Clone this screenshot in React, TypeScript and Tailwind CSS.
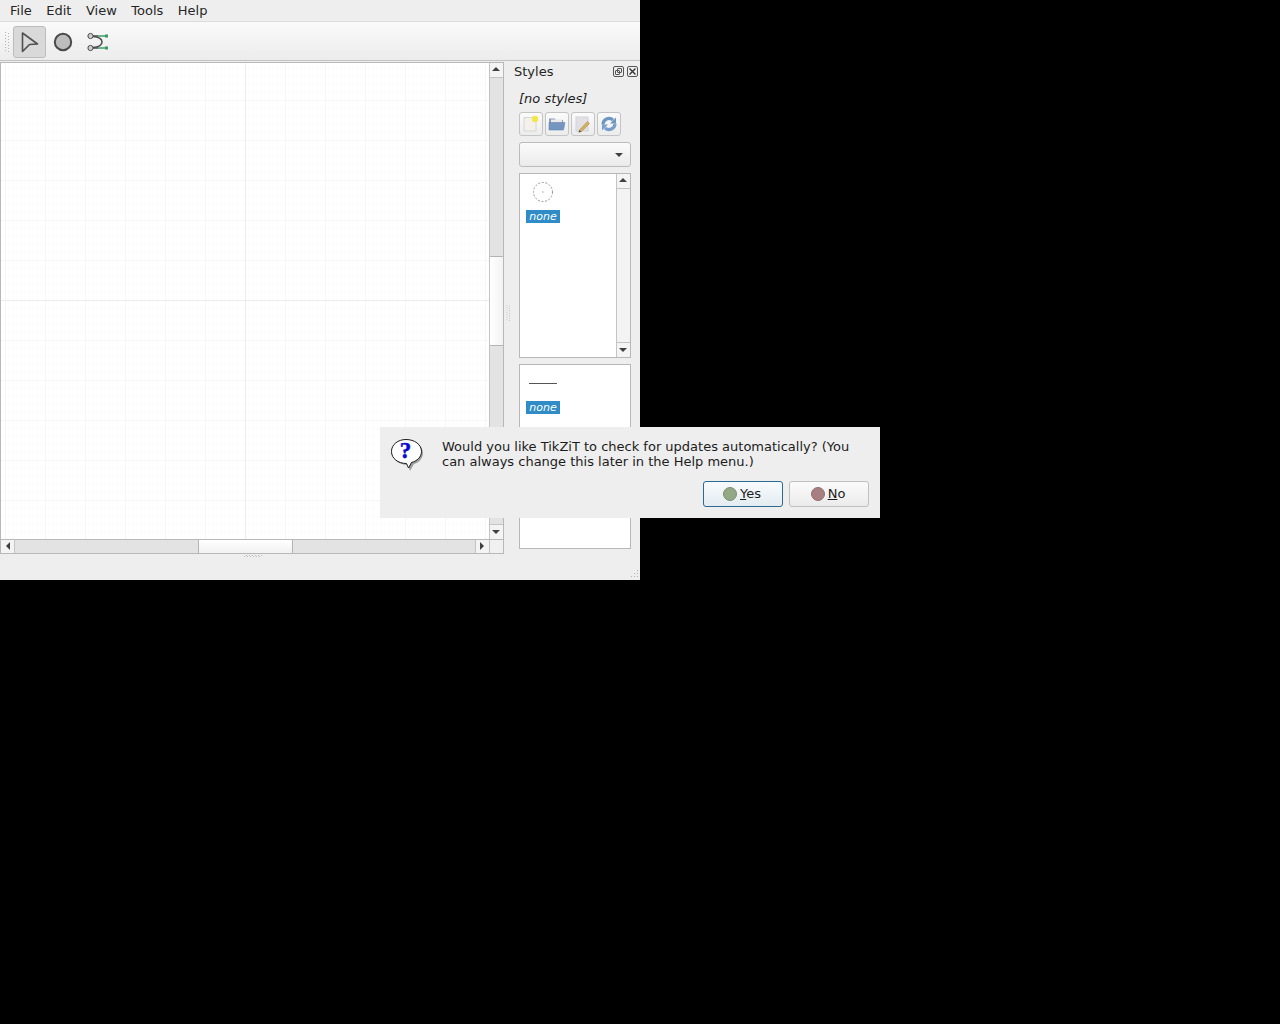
import React from "react";

const menus = ["File", "Edit", "View", "Tools", "Help"];

function Grip({ className }: { className: string }) {
  return (
    <svg className={className} viewBox="0 0 6 20" width="6" height="20">
      {[1, 4, 7, 10, 13, 16, 19].map((y) => (
        <g key={y} fill="#b4b4b4">
          <rect x="0" y={y - 1} width="1" height="1" />
          <rect x="3" y={y} width="1" height="1" />
        </g>
      ))}
    </svg>
  );
}

function Arrow({ dir }: { dir: "up" | "down" | "left" | "right" }) {
  const points = {
    up: "0,5 4,1 8,5",
    down: "0,1 8,1 4,5",
    left: "5,0 5,8 1,4",
    right: "1,0 1,8 5,4",
  }[dir];
  const size = dir === "up" || dir === "down" ? "w-2 h-[6px]" : "w-[6px] h-2";
  const vb = dir === "up" || dir === "down" ? "0 0 8 6" : "0 0 6 8";
  return (
    <svg className={size} viewBox={vb}>
      <polygon points={points} fill="#404040" />
    </svg>
  );
}

function VScroll({ thumbTop, thumbHeight, bg }: { thumbTop: number; thumbHeight: number; bg: string }) {
  return (
    <div className={`flex flex-col w-full h-full ${bg}`}>
      <div className="h-[15px] shrink-0 flex items-center justify-center pr-[1px] pb-[2px] bg-[#f4f4f4] border-b border-[#c4c4c4]">
        <Arrow dir="up" />
      </div>
      <div className="flex-1 flex flex-col min-h-0">
        <div className="shrink-0" style={{ height: thumbTop }} />
        {thumbHeight > 0 && (
          <div
            className="shrink-0 bg-gradient-to-r from-[#ffffff] to-[#f3f3f3] border-y border-[#b4b4b4]"
            style={{ height: thumbHeight }}
          />
        )}
      </div>
      <div className="h-[15px] shrink-0 flex items-center justify-center pr-[1px] bg-[#f4f4f4] border-t border-[#c4c4c4]">
        <Arrow dir="down" />
      </div>
    </div>
  );
}

function CanvasGrid() {
  const minorX = Array.from({ length: 62 }, (_, i) => 4.5 + i * 8);
  const minorY = Array.from({ length: 60 }, (_, i) => 5.5 + i * 8);
  const majorX = Array.from({ length: 13 }, (_, i) => 4.5 + i * 40);
  const majorY = Array.from({ length: 12 }, (_, i) => 37.5 + i * 40);
  return (
    <svg className="w-full h-full block" width="488" height="476">
      {minorX.map((x) => (
        <line key={x} x1={x} x2={x} y1="0" y2="476" stroke="#fcfcfe" />
      ))}
      {minorY.map((y) => (
        <line key={y} y1={y} y2={y} x1="0" x2="488" stroke="#fcfcfe" />
      ))}
      {majorX.map((x) => (
        <line key={x} x1={x} x2={x} y1="0" y2="476" stroke="#f6f6fa" />
      ))}
      {majorY.map((y) => (
        <line key={y} y1={y} y2={y} x1="0" x2="488" stroke="#f6f6fa" />
      ))}
      <line x1="244.5" x2="244.5" y1="0" y2="476" stroke="#ebecf0" />
      <line y1="237.5" y2="237.5" x1="0" x2="488" stroke="#ebecf0" />
    </svg>
  );
}

function ToolSelect() {
  return (
    <svg width="20" height="22" viewBox="0 0 20 22">
      <path d="M2.5 2 L17.5 13 L9.5 13.5 L2.5 20.5 Z" fill="none" stroke="#505050" strokeWidth="1.6" strokeLinejoin="round" />
    </svg>
  );
}

function ToolNode() {
  return (
    <svg width="20" height="20" viewBox="0 0 20 20">
      <circle cx="10" cy="10" r="8.2" fill="#bdbdbd" stroke="#4a4a4a" strokeWidth="2" />
    </svg>
  );
}

function ToolEdge() {
  return (
    <svg width="24" height="20" viewBox="0 0 24 20" className="ml-[2px]">
      <path d="M7 4.5 C13 5 16 7.5 16 10 C16 12.5 13 15 7 15.5" fill="none" stroke="#4a4a4a" strokeWidth="1.5" />
      <path d="M12 4 H20 M12 16 H20" fill="none" stroke="#3f9d68" strokeWidth="1.3" />
      <path d="M7 4 H12 M7 16 H12" fill="none" stroke="#4a4a4a" strokeWidth="1.3" />
      <circle cx="4.5" cy="4" r="2.6" fill="#d0d0d0" stroke="#4a4a4a" />
      <circle cx="4.5" cy="16" r="2.6" fill="#d0d0d0" stroke="#4a4a4a" />
      <rect x="19" y="2.5" width="3" height="3" fill="#2f9e5f" />
      <rect x="19" y="14.5" width="3" height="3" fill="#2f9e5f" />
    </svg>
  );
}

function IconNew() {
  return (
    <svg width="18" height="18" viewBox="0 0 18 18">
      <path d="M2 2.5 H14 V16 H2 Z" fill="#f3f1ea" stroke="#d6d6d6" />
      <circle cx="13" cy="4" r="3.2" fill="#f3e64a" />
    </svg>
  );
}

function IconOpen() {
  return (
    <svg width="18" height="18" viewBox="0 0 18 18" className="opacity-85">
      <path d="M1 3.5 H6.5 L8 5 H15 V8 H1 Z" fill="#7d8faa" />
      <rect x="3" y="4.5" width="11" height="4" fill="#e8e8e8" />
      <path d="M1 15 L1 7.5 H17 L15.5 15 Z" fill="#5f86b8" stroke="#4b74a8" strokeWidth="0.6" />
    </svg>
  );
}

function IconEdit() {
  return (
    <svg width="18" height="18" viewBox="0 0 18 18" className="opacity-85">
      <rect x="2" y="2" width="12" height="14" fill="#dfdde2" stroke="#cfcdd2" />
      <path d="M5.5 15 L13.5 6.5 L15.5 8.5 L7.5 16.5 L5 17 Z" fill="#d0a640" stroke="#8d6f2b" strokeWidth="0.5" />
      <path d="M4.5 17.5 L5.3 15.3 L7.3 16.8 Z" fill="#333333" />
    </svg>
  );
}

function IconRefresh() {
  return (
    <svg width="18" height="18" viewBox="0 0 18 18" fill="none" className="opacity-80">
      <path d="M3 9.5 A6 6 0 0 1 13 5" stroke="#4d7fb5" strokeWidth="3.2" />
      <polygon points="16,2.5 16,8.5 10,8.5" fill="#4d7fb5" />
      <path d="M15 8.5 A6 6 0 0 1 5 13" stroke="#5a8ac0" strokeWidth="3.2" />
      <polygon points="2,15.5 2,9.5 8,9.5" fill="#5a8ac0" />
    </svg>
  );
}

function QuestionBubble() {
  return (
    <svg width="34" height="34" viewBox="0 0 34 34" className="-ml-[1px]">
      <path d="M17 3 C26 3 33 8 33 15 C33 21 28 25 24 26 L20 33 L18 27 C9 27 3 22 3 15 C3 8 9 3 17 3 Z" fill="#9c9c9c" />
      <path d="M16 1.5 C24.5 1.5 31.5 6.5 31.5 13.5 C31.5 19 27 23 21.5 24.5 L18.5 30 L16.5 25.5 C8 25.5 1.5 20.5 1.5 13.5 C1.5 6.5 8 1.5 16 1.5 Z" fill="#ffffff" stroke="#1c1c1c" strokeWidth="1" />
      <text x="15.5" y="20" textAnchor="middle" fontFamily="'Liberation Serif', serif" fontWeight="700" fontSize="23" fill="#0a0ad0" stroke="#0a0ad0" strokeWidth="0.5">?</text>
    </svg>
  );
}

function StyleSwatch({ children, gap }: { children: React.ReactNode; gap: string }) {
  return (
    <div className="pl-[6px] flex flex-col items-start">
      <div className="h-[24px] w-[34px] flex items-center justify-center">{children}</div>
      <div className={`${gap} h-[13px] w-[34px] bg-[#308cc6] text-white italic text-[11px] leading-[13px] text-center`}>none</div>
    </div>
  );
}

export default function App() {
  return (
    <div className="relative w-[1280px] h-[1024px] bg-black overflow-hidden font-['DejaVu_Sans',sans-serif] text-[13px] text-[#1c1c1c]">
      <div className="w-[640px] h-[580px] bg-[#eeeeee] flex flex-col relative">
        {/* menu bar */}
        <div className="h-[22px] shrink-0 flex items-center pl-[3px] bg-[#eeeeee] border-b border-[#dcdcdc]">
          {menus.map((m) => (
            <span key={m} className="px-[7px] leading-[20px] mr-[0.5px] text-[#262626]">{m}</span>
          ))}
        </div>

        {/* toolbar */}
        <div className="h-[39px] shrink-0 flex items-center bg-gradient-to-b from-[#fafafa] to-[#ececec] border-b border-[#c2c2c2] pl-[5px] pt-[2px]">
          <Grip className="mr-[2px]" />
          <div className="w-[33px] h-[32px] rounded-[3px] bg-[#d9d9d9] border border-[#bcbcbc] flex items-center justify-center">
            <ToolSelect />
          </div>
          <div className="w-[34px] h-[32px] flex items-center justify-center">
            <ToolNode />
          </div>
          <div className="w-[34px] h-[32px] flex items-center justify-center">
            <ToolEdge />
          </div>
        </div>

        {/* main area */}
        <div className="flex-1 flex min-h-0">
          <div className="w-[504px] shrink-0 flex flex-col">
            <div className="mt-[1px] h-[492px] border border-[#b8b8b8] flex flex-col bg-white">
              <div className="h-[476px] flex">
                <div className="w-[488px] h-[476px] bg-white"><CanvasGrid /></div>
                <div className="w-[14px] h-[476px] border-l border-[#c4c4c4]">
                  <VScroll thumbTop={178} thumbHeight={90} bg="bg-[#e3e3e3]" />
                </div>
              </div>
              <div className="h-[14px] flex border-t border-[#b8b8b8] bg-[#e3e3e3]">
                <div className="w-[14px] pb-[2px] flex items-center justify-center bg-[#f4f4f4] border-r border-[#c4c4c4]"><Arrow dir="left" /></div>
                <div className="w-[183px]" />
                <div className="w-[95px] bg-gradient-to-b from-white to-[#f1f1f1] border-x border-[#b4b4b4]" />
                <div className="w-[182px]" />
                <div className="w-[14px] pb-[2px] pr-[2px] flex items-center justify-center bg-[#f4f4f4] border-l border-[#c4c4c4]"><Arrow dir="right" /></div>
                <div className="flex-1 bg-[#f0f0f0] border-l border-[#c4c4c4]" />
              </div>
            </div>
            <div className="flex justify-center pt-[1px] pl-[2px]">
              <svg width="18" height="3" viewBox="0 0 18 3">
                {[0, 3, 6, 9, 12, 15].map((x) => (
                  <g key={x} fill="#bcbcbc">
                    <rect x={x} y="1" width="1" height="1" />
                    <rect x={x + 2} y="0" width="1" height="1" />
                  </g>
                ))}
              </svg>
            </div>
          </div>

          {/* styles dock */}
          <div className="flex-1 relative pl-[15px] pr-[9px]">
            <div className="h-[21px] mt-0 -ml-[5px] -mr-[9px] flex items-center justify-between pr-[2px]">
              <span className="text-[#262626]">Styles</span>
              <div className="flex gap-[3px]">
                <div className="w-[11px] h-[11px] rounded-[2px] border border-[#555555] relative">
                  <div className="absolute left-[3px] top-[1px] w-[5px] h-[5px] border border-[#555555] rounded-[1px]" />
                  <div className="absolute left-[1px] top-[3px] w-[5px] h-[5px] border border-[#555555] rounded-[1px]" />
                </div>
                <div className="w-[11px] h-[11px] rounded-[2px] border border-[#555555] flex items-center justify-center">
                  <svg width="7" height="7" viewBox="0 0 7 7"><path d="M0.5 0.5 L6.5 6.5 M6.5 0.5 L0.5 6.5" stroke="#333333" strokeWidth="1.4" /></svg>
                </div>
              </div>
            </div>
            <div className="italic h-[16px] leading-[16px] mt-[9px] text-[#1c1c1c]">[no styles]</div>
            <div className="flex gap-[2px] mt-[5px]">
              {[<IconNew key="n" />, <IconOpen key="o" />, <IconEdit key="e" />, <IconRefresh key="r" />].map((icon, i) => (
                <div key={i} className="w-[24px] h-[24px] rounded-[3px] border border-[#c4c4c4] bg-gradient-to-b from-[#fbfbfb] to-[#ececec] flex items-center justify-center">
                  {icon}
                </div>
              ))}
            </div>
            <div className="w-[112px] h-[25px] mt-[6px] rounded-[3px] border border-[#bcbcbc] bg-gradient-to-b from-[#fbfbfb] to-[#ebebeb] flex items-center justify-end pr-[7px]">
              <Arrow dir="down" />
            </div>
            <div className="w-[112px] h-[185px] mt-[6px] border border-[#b8b8b8] bg-white flex">
              <div className="flex-1 pt-[6px]">
                <StyleSwatch gap="mt-[6px]">
                  <svg width="22" height="22" viewBox="0 0 22 22">
                    <circle cx="11" cy="11" r="9.5" fill="none" stroke="#8e93ad" strokeDasharray="2 1.6" />
                    <rect x="10.5" y="10.5" width="1" height="1" fill="#777777" />
                  </svg>
                </StyleSwatch>
              </div>
              <div className="w-[14px] border-l border-[#c4c4c4]">
                <VScroll thumbTop={0} thumbHeight={0} bg="bg-[#f3f3f3]" />
              </div>
            </div>
            <div className="w-[112px] h-[185px] mt-[6px] border border-[#b8b8b8] bg-white pt-[6px]">
              <StyleSwatch gap="mt-[6px]">
                <svg width="28" height="4" viewBox="0 0 28 4">
                  <line x1="0" x2="28" y1="2.5" y2="2.5" stroke="#555555" />
                </svg>
              </StyleSwatch>
            </div>
            <Grip className="absolute left-[2px] top-[244px] h-[16px]" />
            <svg className="absolute right-[1px] bottom-[1px]" width="10" height="10" viewBox="0 0 10 10">
              {[[8, 1], [5, 4], [8, 4], [2, 7], [5, 7], [8, 7]].map(([x, y]) => (
                <rect key={`${x}-${y}`} x={x} y={y} width="1" height="1" fill="#b4b4b4" />
              ))}
            </svg>
          </div>
        </div>
      </div>

      {/* update prompt window */}
      <div className="absolute left-[380px] top-[427px] w-[500px] h-[91px] bg-[#eeeeee] pt-[11px] pl-[11px] pr-[11px]">
        <div className="flex">
          <QuestionBubble />
          <p className="ml-[18px] mt-[1px] w-[425px] leading-[15px] text-[13px] text-[#1c1c1c]">
            Would you like TikZiT to check for updates automatically? (You can always change this later in the Help menu.)
          </p>
        </div>
        <div className="flex justify-end gap-[6px] mt-[9px]">
          <button className="w-[80px] h-[26px] pr-[2px] rounded-[3px] border border-[#2b6a92] bg-gradient-to-b from-[#f8fbfd] to-[#e3ecf1] flex items-center justify-center gap-[3px] text-[#1c1c1c]">
            <span className="w-[14px] h-[14px] rounded-full bg-[#93a885] border border-[#7d8d74]" />
            <span><span className="underline">Y</span>es</span>
          </button>
          <button className="w-[80px] h-[26px] pr-[2px] rounded-[3px] border border-[#c0c0c0] bg-gradient-to-b from-[#fbfbfb] to-[#ebebeb] flex items-center justify-center gap-[3px] text-[#1c1c1c]">
            <span className="w-[14px] h-[14px] rounded-full bg-[#a87f80] border border-[#8d7070]" />
            <span><span className="underline">N</span>o</span>
          </button>
        </div>
      </div>
    </div>
  );
}
